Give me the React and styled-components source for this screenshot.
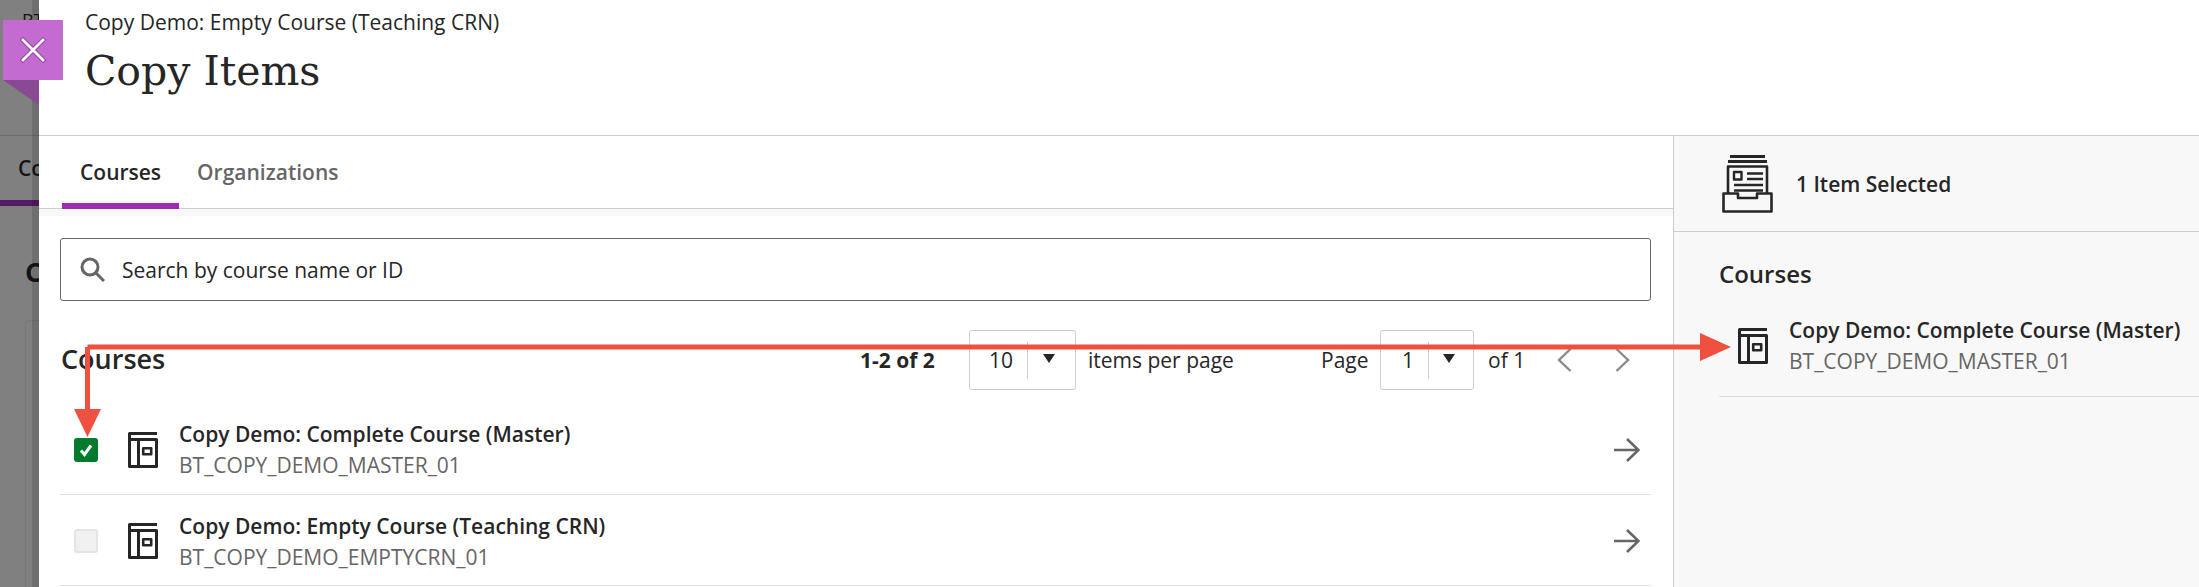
import React from "react";
import styled, { createGlobalStyle } from "styled-components";

const Global = createGlobalStyle`
  html, body { margin: 0; padding: 0; height: 100%; background: #7f7f7f; }
  body { font-family: "Open Sans", "Liberation Sans", sans-serif; color: #262626; overflow: hidden; }
  * { box-sizing: border-box; }
`;

const Page = styled.div`position: relative; display: flex; width: 2199px; height: 587px; overflow: hidden;`;

const Backdrop = styled.div`
  position: relative; flex: 0 0 39px; height: 100%; overflow: hidden; background: #808080;
  color: #141414; font-weight: 600;
  &::after { content: ""; position: absolute; top: 0; bottom: 0; right: 0; width: 7px; background: rgba(0, 0, 0, 0.13); }
`;
const BackLine = styled.div`height: 136px; border-bottom: 1px solid #6c6c6c; padding: 10px 0 0 22px; line-height: 20px; font-size: 18px; font-weight: 400; white-space: nowrap; overflow: hidden;`;
const BackTab = styled.div`height: 70px; padding: 17px 0 0 18px; line-height: 30px; border-bottom: 6px solid #541a66; white-space: nowrap; font-size: 21px; overflow: hidden;`;
const BackHead = styled.div`padding: 48px 0 0 25px; line-height: 36px; font-size: 27px; font-weight: 700; white-space: nowrap; overflow: hidden;`;
const BackCard = styled.div`margin: 30px 0 0 25px; height: 300px; width: 30px; border: 1px solid #777; border-radius: 5px;`;

const CloseTab = styled.button`
  position: absolute; left: 3px; top: 20px; width: 60px; height: 60px; padding: 0; border: 0; background: #c36bd0;
  display: flex; align-items: center; justify-content: center; z-index: 3;
`;
const Fold = styled.div`
  position: absolute; left: 3px; top: 80px; width: 36px; height: 25px; background: #884a94; clip-path: polygon(0 0, 100% 0, 100% 100%);
  z-index: 3;
`;

const Panel = styled.div`flex: 1; min-width: 0; display: flex; flex-direction: column; background: #fff;`;
const Header = styled.header`flex: 0 0 136px; padding: 7px 0 0 46px; border-bottom: 1px solid #cdcdcd;`;
const Crumb = styled.div`font-size: 21px; line-height: 30px; color: #262626;`;
const Title = styled.h1`margin: 6px 0 0; font-family: "DejaVu Serif", "Liberation Serif", serif; font-weight: 400; font-size: 41px; line-height: 56px; color: #262626;`;

const Body = styled.div`flex: 1; display: flex; min-height: 0;`;
const Main = styled.main`flex: 0 0 1635px; display: flex; flex-direction: column; border-right: 1px solid #cdcdcd;`;
const Tabs = styled.nav`flex: 0 0 73px; display: flex; padding-left: 23px; border-bottom: 1px solid #cdcdcd; align-items: flex-end;`;
const TabItem = styled.div`
  height: 73px; padding: 21px 18px 0; margin-bottom: -1px; font-size: 21px; font-weight: 600; line-height: 30px;
  color: ${p => (p.$active ? "#262626" : "#666")};
  border-bottom: 6px solid ${p => (p.$active ? "#a12bb3" : "transparent")};
`;
const Strip = styled.div`flex: 0 0 7px; background: #f8f8f8;`;
const Content = styled.div`flex: 1; padding: 22px 22px 0 21px;`;
const Search = styled.div`
  height: 63px; border: 1px solid #666; border-radius: 3px; display: flex; align-items: center; padding-left: 19px; gap: 17px;
  font-size: 21px; color: #262626;
`;
const ListBar = styled.div`display: flex; align-items: center; height: 102px; padding-top: 15px; font-size: 21px;`;
const ListTitle = styled.h2`margin: -2px 0 0 1px; font-size: 27px; font-weight: 600; line-height: 36px; width: 799px; color: #262626;`;
const Count = styled.div`width: 109px; font-weight: 700; font-size: 21px; white-space: nowrap;`;
const SelectBox = styled.div`
  width: ${p => p.$w}px; height: 60px; border: 1px solid #cdcdcd; border-radius: 3px; display: flex; align-items: center; position: relative; padding-left: ${p => p.$pl}px;
`;
const SelectSep = styled.div`position: absolute; left: ${p => p.$x}px; top: 11px; bottom: 10px; width: 1px; background: #cdcdcd;`;
const Caret = styled.div`position: absolute; left: ${p => p.$x}px; top: 23px; width: 0; height: 0; border-left: 6px solid transparent; border-right: 6px solid transparent; border-top: 9px solid #262626;`;
const Plain = styled.div`margin-left: ${p => p.$ml}px; width: ${p => p.$w}px; white-space: nowrap;`;
const Nav = styled.div`margin-left: ${p => p.$ml}px; display: flex; align-items: center;`;

const Row = styled.div`
  height: ${p => p.$h}px; display: flex; align-items: center; border-bottom: 1px solid #e2e2e2; padding: 2px 0 0 14px;
`;
const Check = styled.div`
  flex: 0 0 24px; height: 24px; border-radius: 3px; display: flex; align-items: center; justify-content: center;
  background: ${p => (p.$on ? "#037b2f" : "#f0f0f0")}; border: ${p => (p.$on ? "0" : "2px solid #e5e5e5")};
`;
const IconSlot = styled.div`flex: 0 0 30px; margin-left: 30px; display: flex;`;
const Text = styled.div`margin-left: 21px; flex: 1; display: flex; flex-direction: column;`;
const ItemTitle = styled.div`font-size: 21px; font-weight: 600; line-height: 30px; color: #262626; white-space: nowrap;`;
const ItemSub = styled.div`font-size: 21px; line-height: 30px; color: #666; margin-top: 1px; white-space: nowrap;`;
const RowArrow = styled.div`margin-right: 11px; display: flex;`;

const Side = styled.aside`flex: 1; background: #f8f8f8; display: flex; flex-direction: column; min-width: 0;`;
const SideHead = styled.div`flex: 0 0 96px; border-bottom: 1px solid #cdcdcd; display: flex; align-items: center; padding: 0 0 0 48px; gap: 23px; font-size: 21px; font-weight: 600;`;
const SideBody = styled.div`padding: 23px 0 0 45px;`;
const SideTitle = styled.h3`margin: 0; font-size: 24px; font-weight: 600; line-height: 38px; color: #262626;`;
const SideRow = styled.div`height: 104px; display: flex; align-items: flex-start; padding: 35px 0 0 19px; border-bottom: 1px solid #dedede;`;
const SideText = styled.div`margin-left: 21px; margin-top: -13px; display: flex; flex-direction: column;`;

const Annotation = styled.svg`position: absolute; left: 0; top: 0; z-index: 5; pointer-events: none;`;

const Course = () => (
  <svg width="30" height="36" viewBox="0 0 30 36" fill="none" stroke="#262626" strokeWidth="3" strokeLinejoin="round">
    <path d="M29 1.5H1.5V34.5H28.5V7.5H1.5M10.5 7.5V34.5" />
    <rect x="15.2" y="16.2" width="8" height="6" strokeWidth="2.6" />
  </svg>
);

const Inbox = () => (
  <svg width="51" height="58" viewBox="0 0 51 58" fill="none" stroke="#262626" strokeWidth="2.6" strokeLinejoin="round">
    <path d="M8 1.5H43M6 6.5H45" strokeWidth="2.8" />
    <path d="M6 38V11.5H45V38" />
    <rect x="12" y="17" width="7.5" height="7.5" strokeWidth="2.4" />
    <path d="M25 18.5H41M25 24H41M12 30H41M12 35.5H41" />
    <path d="M1.5 38.5H16V43H35V38.5H49.5V56.5H1.5Z" />
  </svg>
);

const Arrow = () => (
  <svg width="26" height="24" viewBox="0 0 26 24" fill="none" stroke="#666" strokeWidth="2.6">
    <path d="M0 12H24M13 1L24.5 12L13 23" />
  </svg>
);

const Chevron = ({ dir }) => (
  <svg width="15" height="24" viewBox="0 0 15 24" fill="none" stroke="#8a8a8a" strokeWidth="2.4">
    <path d={dir === "l" ? "M13.5 1L2 12L13.5 23" : "M1.5 1L13 12L1.5 23"} />
  </svg>
);

export default function App() {
  return (
    <Page>
      <Global />
      <Backdrop>
        <BackLine>BT</BackLine>
        <BackTab>Co</BackTab>
        <BackHead>C</BackHead>
        <BackCard />
      </Backdrop>
      <CloseTab aria-label="Close">
        <svg width="26" height="26" viewBox="0 0 26 26" fill="none" strokeLinecap="square">
          <path d="M3 3L23 23M23 3L3 23" stroke="#9840a8" strokeWidth="4.8" />
          <path d="M3 3L23 23M23 3L3 23" stroke="#fff" strokeWidth="2.8" />
        </svg>
      </CloseTab>
      <Fold />
      <Panel>
        <Header>
          <Crumb>Copy Demo: Empty Course (Teaching CRN)</Crumb>
          <Title>Copy Items</Title>
        </Header>
        <Body>
          <Main>
            <Tabs>
              <TabItem $active>Courses</TabItem>
              <TabItem>Organizations</TabItem>
            </Tabs>
            <Strip />
            <Content>
              <Search>
                <svg width="25" height="25" viewBox="0 0 25 25" fill="none" stroke="#666" strokeWidth="3">
                  <circle cx="10" cy="10" r="8" />
                  <path d="M16 16L24 24" />
                </svg>
                Search by course name or ID
              </Search>
              <ListBar>
                <ListTitle>Courses</ListTitle>
                <Count>1-2 of 2</Count>
                <SelectBox $w={107} $pl={19}>
                  10
                  <SelectSep $x={57} />
                  <Caret $x={73} />
                </SelectBox>
                <Plain $ml={12} $w={233}>items per page</Plain>
                <Plain $ml={0} $w={59}>Page</Plain>
                <SelectBox $w={94} $pl={21}>
                  1
                  <SelectSep $x={47} />
                  <Caret $x={62} />
                </SelectBox>
                <Plain $ml={14} $w={69}>of 1</Plain>
                <Nav $ml={0}>
                  <Chevron dir="l" />
                </Nav>
                <Nav $ml={43}>
                  <Chevron dir="r" />
                </Nav>
              </ListBar>
              <Row $h={92}>
                <Check $on>
                  <svg width="16" height="16" viewBox="0 0 16 16" fill="none" stroke="#fff" strokeWidth="3">
                    <path d="M3 8.5L6.5 12.5L13 3.5" />
                  </svg>
                </Check>
                <IconSlot><Course /></IconSlot>
                <Text>
                  <ItemTitle>Copy Demo: Complete Course (Master)</ItemTitle>
                  <ItemSub>BT_COPY_DEMO_MASTER_01</ItemSub>
                </Text>
                <RowArrow><Arrow /></RowArrow>
              </Row>
              <Row $h={91}>
                <Check />
                <IconSlot><Course /></IconSlot>
                <Text>
                  <ItemTitle>Copy Demo: Empty Course (Teaching CRN)</ItemTitle>
                  <ItemSub>BT_COPY_DEMO_EMPTYCRN_01</ItemSub>
                </Text>
                <RowArrow><Arrow /></RowArrow>
              </Row>
            </Content>
          </Main>
          <Side>
            <SideHead>
              <Inbox />
              1 Item Selected
            </SideHead>
            <SideBody>
              <SideTitle>Courses</SideTitle>
              <SideRow>
                <Course />
                <SideText>
                  <ItemTitle>Copy Demo: Complete Course (Master)</ItemTitle>
                  <ItemSub>BT_COPY_DEMO_MASTER_01</ItemSub>
                </SideText>
              </SideRow>
            </SideBody>
          </Side>
        </Body>
      </Panel>
      <Annotation width="2199" height="587" viewBox="0 0 2199 587">
        <path d="M87.5 347H1702M87.5 347V411" fill="none" stroke="#f0503f" strokeWidth="5" />
        <polygon points="74,409 101,409 87.5,437" fill="#f0503f" />
        <polygon points="1700,333 1731,347 1700,361" fill="#f0503f" />
      </Annotation>
    </Page>
  );
}
